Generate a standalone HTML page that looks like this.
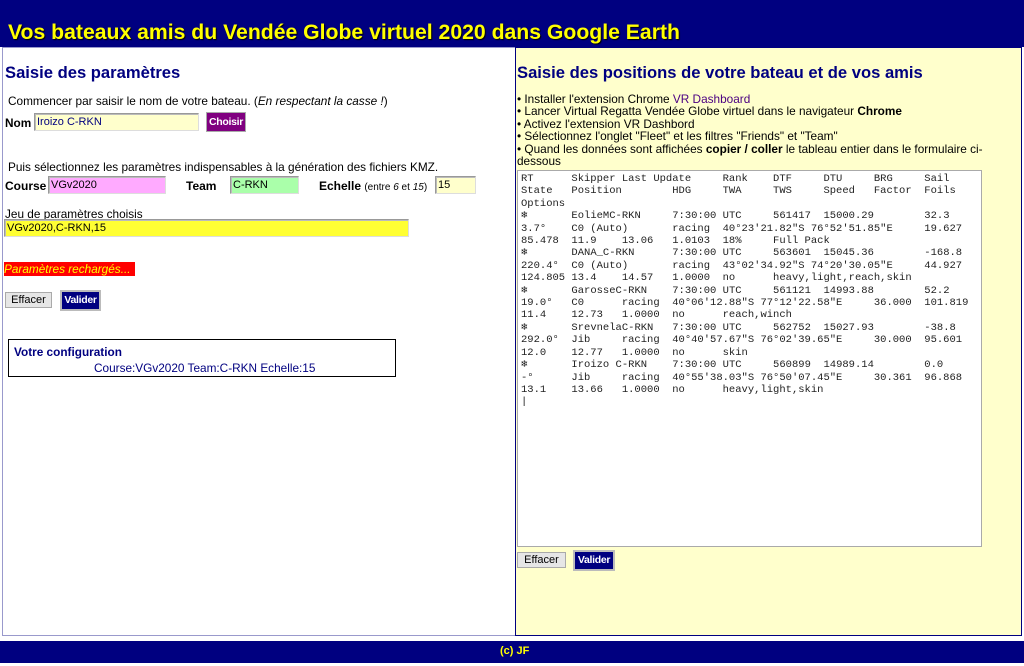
<!DOCTYPE html>
<html><head><meta charset="utf-8"><style>
*{margin:0;padding:0;box-sizing:border-box}
body{width:1024px;height:666px;background:#fff;font-family:"Liberation Sans",sans-serif;font-size:11.8px;color:#000;position:relative;overflow:hidden}
.a{position:absolute;white-space:nowrap}
#hdr{left:0;top:0;width:1024px;height:47px;background:#000080}
#title{left:8px;top:21px;color:#ffff00;font-weight:bold;font-size:21.2px;text-shadow:1px 1px 1px #000}
#lp{left:2px;top:47px;width:514px;height:589px;border:1px solid #9999cc;border-right:none}
#rp{left:515px;top:47px;width:507px;height:589px;background:#ffffcc;border:1px solid #000080}
h2{position:absolute;font-size:16.6px;color:#000080;font-weight:bold;white-space:nowrap}
.in{position:absolute;border:1px solid;border-color:#999 #ddd #ddd #999;font-size:11px;padding:2px 2px;box-shadow:inset 1px 1px 0 #bbb}
b{font-weight:bold}
.btn{position:absolute;font-size:11px;text-align:center;border:1px solid #aaa;overflow:hidden}
#ta{left:517px;top:170px;width:465px;height:377px;background:#fff;border:1px solid #aaa;padding:2px 3px;font-family:"Liberation Mono",monospace;font-size:10.5px;line-height:12.4px;white-space:pre;overflow:hidden;color:#222}
#ftr{left:0;top:641px;width:1024px;height:22px;background:#000080;color:#ffff00;font-weight:bold;font-size:11px}
</style></head><body>
<div class="a" id="hdr"></div>
<div class="a" id="title">Vos bateaux amis du Vendée Globe virtuel 2020 dans Google Earth</div>
<div class="a" id="lp"></div>
<div class="a" id="rp"></div>

<h2 style="left:5px;top:63px">Saisie des paramètres</h2>
<div class="a" style="left:8px;top:94px">Commencer par saisir le nom de votre bateau. (<i>En respectant la casse !</i>)</div>
<div class="a" style="left:5px;top:116px"><b>Nom</b></div>
<div class="in" style="left:34px;top:113px;width:165px;height:18px;background:#ffffcc;color:#000080">Iroizo C-RKN</div>
<div class="btn" style="left:206px;top:112px;width:40px;height:20px;background:#800080;color:#fff;font-weight:bold;line-height:18px;font-size:10.5px;letter-spacing:-0.3px">Choisir</div>
<div class="a" style="left:8px;top:160px">Puis sélectionnez les paramètres indispensables à la génération des fichiers KMZ.</div>
<div class="a" style="left:5px;top:179px;font-size:12px"><b>Course</b></div>
<div class="in" style="left:48px;top:176px;width:118px;height:18px;background:#ffaaff">VGv2020</div>
<div class="a" style="left:186px;top:179px;font-size:12px"><b>Team</b></div>
<div class="in" style="left:230px;top:176px;width:69px;height:18px;background:#aaffaa">C-RKN</div>
<div class="a" style="left:319px;top:179px"><b style="font-size:12px">Echelle</b> <span style="font-size:10px">(entre <i>6</i> et <i>15</i>)</span></div>
<div class="in" style="left:435px;top:176px;width:41px;height:18px;background:#ffffcc">15</div>
<div class="a" style="left:5px;top:207px">Jeu de paramètres choisis</div>
<div class="in" style="left:4px;top:219px;width:405px;height:18px;background:#ffff33">VGv2020,C-RKN,15</div>
<div class="a" style="left:4px;top:262px;width:131px;height:14px;background:#ff0000;color:#ffff00;font-style:italic;line-height:14px">Paramètres rechargés...</div>
<div class="btn" style="left:5px;top:292px;width:47px;height:16px;background:#e6e6e6;line-height:14px">Effacer</div>
<div class="btn" style="left:60px;top:290px;width:41px;height:21px;background:#000080;color:#fff;font-weight:bold;line-height:17px;border:2px solid #bbb;font-size:10.5px;letter-spacing:-0.3px">Valider</div>
<div class="a" style="left:8px;top:339px;width:388px;height:38px;border:1px solid #000"></div>
<div class="a" style="left:14px;top:345px;color:#000080;font-weight:bold">Votre configuration</div>
<div class="a" style="left:94px;top:361px;color:#000080">Course:VGv2020 Team:C-RKN Echelle:15</div>

<h2 style="left:517px;top:63px">Saisie des positions de votre bateau et de vos amis</h2>
<div class="a" style="left:517px;top:93px;line-height:12.4px;white-space:normal;width:500px">• Installer l'extension Chrome <span style="color:#4b0082">VR Dashboard</span><br>• Lancer Virtual Regatta Vendée Globe virtuel dans le navigateur <b>Chrome</b><br>• Activez l'extension VR Dashbord<br>• Sélectionnez l'onglet "Fleet" et les filtres "Friends" et "Team"<br>• Quand les données sont affichées <b>copier / coller</b> le tableau entier dans le formulaire ci-dessous</div>
<div class="a" id="ta">RT      Skipper Last Update     Rank    DTF     DTU     BRG     Sail
State   Position        HDG     TWA     TWS     Speed   Factor  Foils
Options
❄       EolieMC-RKN     7:30:00 UTC     561417  15000.29        32.3
3.7°    C0 (Auto)       racing  40°23'21.82"S 76°52'51.85"E     19.627
85.478  11.9    13.06   1.0103  18%     Full Pack
❄       DANA_C-RKN      7:30:00 UTC     563601  15045.36        -168.8
220.4°  C0 (Auto)       racing  43°02'34.92"S 74°20'30.05"E     44.927
124.805 13.4    14.57   1.0000  no      heavy,light,reach,skin
❄       GarosseC-RKN    7:30:00 UTC     561121  14993.88        52.2
19.0°   C0      racing  40°06'12.88"S 77°12'22.58"E     36.000  101.819
11.4    12.73   1.0000  no      reach,winch
❄       SrevnelaC-RKN   7:30:00 UTC     562752  15027.93        -38.8
292.0°  Jib     racing  40°40'57.67"S 76°02'39.65"E     30.000  95.601
12.0    12.77   1.0000  no      skin
❄       Iroizo C-RKN    7:30:00 UTC     560899  14989.14        0.0
-°      Jib     racing  40°55'38.03"S 76°50'07.45"E     30.361  96.868
13.1    13.66   1.0000  no      heavy,light,skin
|</div>
<div class="btn" style="left:517px;top:552px;width:49px;height:16px;background:#e6e6e6;line-height:14px">Effacer</div>
<div class="btn" style="left:573px;top:550px;width:42px;height:21px;background:#000080;color:#fff;font-weight:bold;line-height:17px;border:2px solid #bbb;font-size:10.5px;letter-spacing:-0.3px">Valider</div>

<div class="a" id="ftr"><span style="position:absolute;left:500px;top:4px">(c) JF</span></div>
</body></html>
